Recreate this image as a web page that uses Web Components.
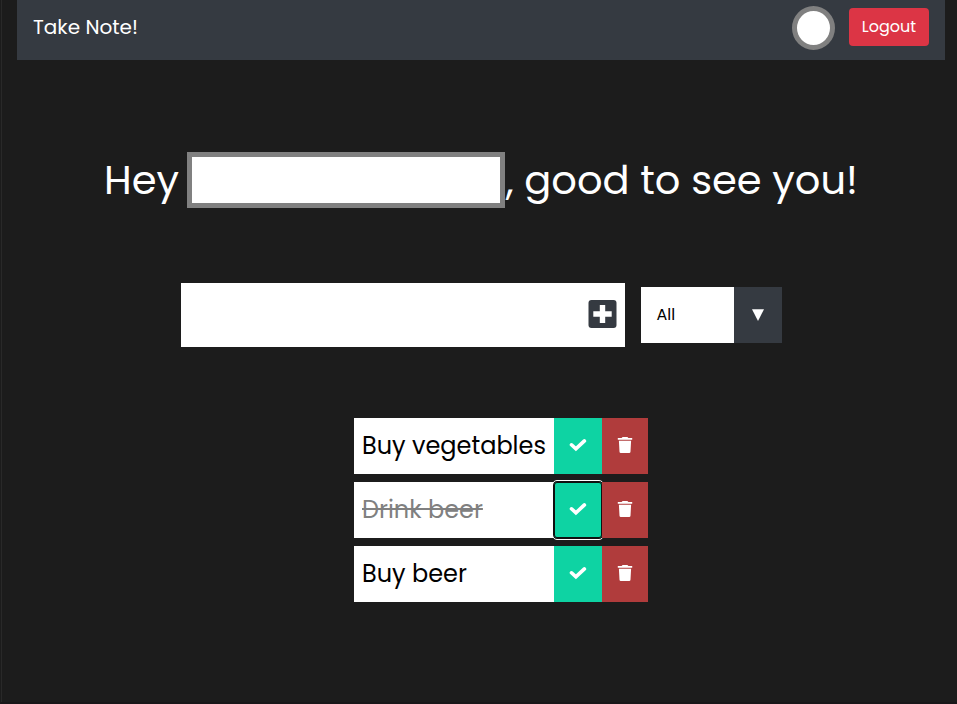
<!DOCTYPE html>
<html lang="en">
<head>
<meta charset="utf-8">
<title>Take Note!</title>
<style>
html, body { margin: 0; height: 100%; background: #1c1c1c; overflow: hidden; }
body { font-family: Poppins, Inter, "Open Sans", sans-serif; color: #fff; }
</style>
</head>
<body>
<note-app></note-app>
<script>
function define(name, html) {
  customElements.define(name, class extends HTMLElement {
    connectedCallback() {
      if (this.shadowRoot) return;
      const t = document.createElement('template');
      t.innerHTML = html;
      this.attachShadow({ mode: 'open' }).append(t.content.cloneNode(true));
    }
  });
}

define('nav-bar', `
<style>
:host{display:flex;height:60px;box-sizing:border-box;padding:0 16px 6px;align-items:center;background:#353a41;font-size:20px}
.avatar{box-sizing:border-box;width:43px;height:44px;border:5px solid #808080;border-radius:50%;background:#fff;margin:2px 14px 0 auto}
button{box-sizing:border-box;width:80px;height:38px;border:0;border-radius:4px;background:#dc3545;color:#fff;font:inherit;font-size:16px;padding:0;line-height:36px}
</style>
<span>Take Note!</span>
<div class="avatar"></div>
<button>Logout</button>`);

define('greeting-line', `
<style>
:host{display:flex;height:56px;align-items:center;justify-content:center;font-size:40px;line-height:56px;white-space:nowrap}
span{white-space:pre}
.name{box-sizing:border-box;width:318px;height:56px;border:5px solid #808080;background:#fff;margin:0 1px 0 -3px}
</style>
<span>Hey </span><div class="name"></div><span>, good to see you!</span>`);

define('note-form', `
<style>
:host{display:flex;align-items:center;justify-content:center;gap:16px}
.field{box-sizing:border-box;width:444px;height:64px;padding:0 8px 2px 0;background:#fff;display:flex;align-items:center;justify-content:flex-end}
.select{display:flex;width:141px;height:56px;background:#fff;color:#000;font-size:16px}
.value{flex:1;padding-left:16px;line-height:55px}
.arrow{width:48px;background:#353a41;display:flex;align-items:center;justify-content:center}
svg{display:block}
</style>
<div class="field"><svg width="29" height="28" viewBox="0 0 29 28"><rect x=".5" width="28" height="28" rx="3" fill="#353a41"/><path d="M11.8 5h5.4v6.3h6.5v5.4h-6.5V23h-5.4v-6.3H5.3v-5.4h6.5z" fill="#fff"/></svg></div>
<div class="select"><div class="value">All</div><div class="arrow"><svg width="12" height="12" viewBox="0 0 12 12"><path d="M0 .2h12L6 12z" fill="#fff"/></svg></div></div>`);

define('note-item', `
<style>
:host{display:flex;width:294px;height:56px;color:#000;font-size:24px;line-height:56px}
.text{box-sizing:border-box;width:200px;padding-left:8px;background:#fff;white-space:nowrap}
:host([done]) .text{color:#808080;text-decoration:line-through}
.check,.trash{display:flex;align-items:center;justify-content:center}
.check{width:48px;background:#0ed3a3}
.trash{position:relative;z-index:1;width:46px;background:#b03c3c}
:host([done]) .check{position:relative;border-radius:3px;outline:1px solid #fff;outline-offset:1px;box-shadow:0 0 0 1px #101010,inset 0 0 0 1px #101010}
svg{display:block;margin-bottom:2px}
</style>
<div class="text"><slot></slot></div>
<div class="check"><svg width="18" height="18" viewBox="0 0 18 18"><path d="M2.5 8.8l4.4 4.1 8.5-8" fill="none" stroke="#fff" stroke-width="3.6" stroke-linecap="round"/></svg></div>
<div class="trash"><svg width="16" height="18" viewBox="0 0 16 18"><path d="M.8 2.1h3.8L5.6 1h4.8l1 1.1h3.8v1.7H.8zM1.9 4.8h12.2l-.6 11q-.1 1.2-1.3 1.2H3.8q-1.2 0-1.3-1.2z" fill="#fff"/></svg></div>`);

define('note-app', `
<style>
:host{display:flex;flex-direction:column;box-sizing:border-box;height:704px;padding:0 12px 0 16px;border-left:1px solid #1c1c1c;border-bottom:2px solid #191719;background:linear-gradient(#292929,#292929) 0 0/1px 100% no-repeat #1c1c1c}
greeting-line{margin-top:92px}
note-form{margin-top:75px}
.list{display:grid;gap:8px;margin:71px 0 0 337px}
</style>
<nav-bar></nav-bar>
<greeting-line></greeting-line>
<note-form></note-form>
<div class="list">
<note-item>Buy vegetables</note-item>
<note-item done>Drink beer</note-item>
<note-item>Buy beer</note-item>
</div>`);
</script>
</body>
</html>
